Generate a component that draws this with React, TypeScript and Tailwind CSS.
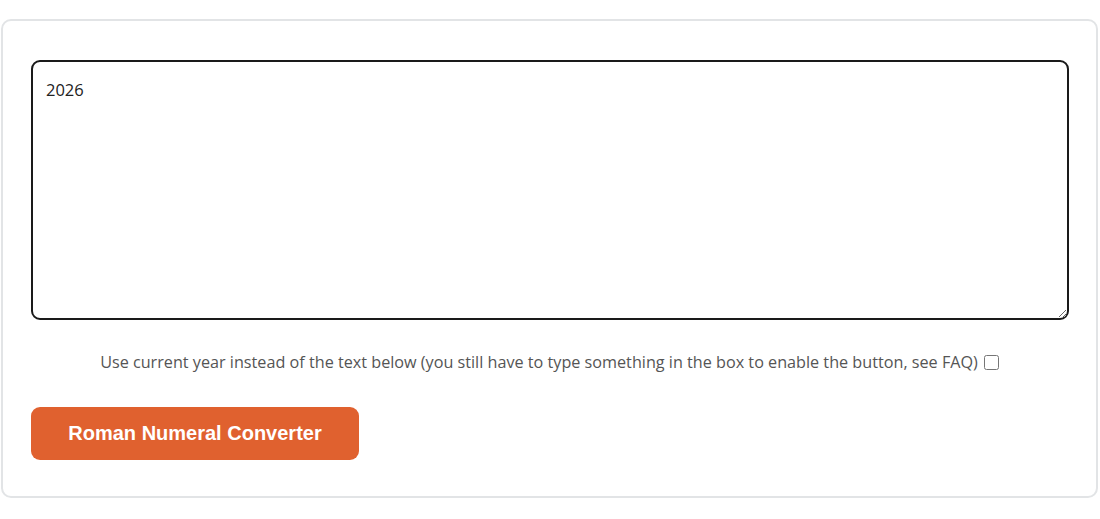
import React from "react";

export default function App() {
  return (
    <div className="w-[1100px] h-[519px] bg-white pt-[19px] pl-[1px] pr-[2px]" style={{ fontFamily: '"Open Sans", sans-serif' }}>
      <div className="border-2 border-[#e2e4e6] rounded-[10px] h-[479px] px-[28px] pt-[39px]">
        <textarea
          defaultValue="2026"
          className="block w-[1038px] h-[260px] border-2 border-[#1a1a1a] rounded-[9px] px-[13px] py-[17px] text-[16.5px] leading-[22px] text-[#222] outline-none resize-y"
          style={{ fontFamily: '"Open Sans", sans-serif' }}
        />
        <div className="mt-[31px] flex items-center justify-center text-[16.2px] leading-[22px] text-[#555]">
          <span>Use current year instead of the text below (you still have to type something in the box to enable the button, see FAQ)</span>
          <input type="checkbox" className="ml-[6px] w-[15px] h-[15px]" />
        </div>
        <button
          className="mt-[34px] w-[328px] h-[53px] bg-[#e0612f] rounded-[9px] text-white font-bold text-[20px] pb-[2px]"
          style={{ fontFamily: '"Liberation Sans", Arial, sans-serif' }}
        >
          Roman Numeral Converter
        </button>
      </div>
    </div>
  );
}
